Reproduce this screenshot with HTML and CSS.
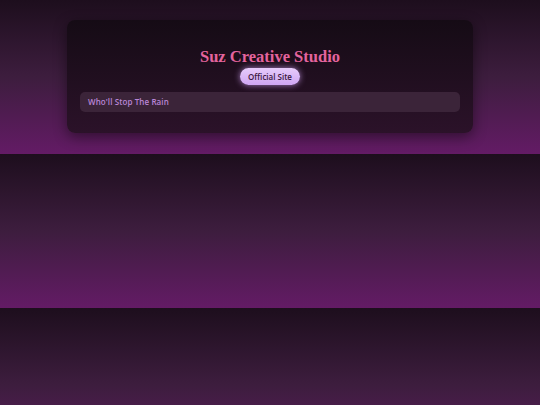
FILE: index.html
```html
<!DOCTYPE html>
<html>
<head>
<meta charset="utf-8">
<link rel="stylesheet" href="styles.css">
</head>
<body>
<main class="card">
  <h1 class="title">Suz Creative Studio</h1>
  <div class="badge-row"><a class="badge">Official Site</a></div>
  <ul class="list">
    <li class="item">Who'll Stop The Rain</li>
  </ul>
</main>
</body>
</html>
```
FILE: styles.css
```css
html {
  margin: 0;
}
body {
  margin: 0;
  padding: 20px 0 21px;
  background: linear-gradient(to bottom, #1d0e1d 0%, #3d1d3e 50%, #631b65 100%);
  font-family: "Open Sans", "Liberation Sans", sans-serif;
}
.card {
  width: 406px;
  margin: 0 auto;
  box-sizing: border-box;
  padding: 26px 13px 21px;
  border-radius: 8px;
  background: linear-gradient(to bottom, #150b15 0%, #2b1229 100%);
  box-shadow: 0 4px 14px rgba(0, 0, 0, 0.45);
}
.title {
  margin: 0;
  text-align: center;
  font-family: "Liberation Serif", "DejaVu Serif", serif;
  font-weight: 700;
  font-size: 16.5px;
  line-height: 22px;
  color: #e4649e;
}
.badge-row {
  display: flex;
  justify-content: center;
}
.badge {
  display: inline-block;
  padding: 0 8px;
  height: 17px;
  line-height: 17px;
  border-radius: 9px;
  background: linear-gradient(to bottom, #e6cbfb, #cfa6f3);
  color: #3a1840;
  font-size: 8px;
  font-weight: 600;
  box-shadow: 0 0 6px rgba(210, 160, 245, 0.75);
}
.list {
  list-style: none;
  margin: 7px 0 0;
  padding: 0;
}
.item {
  height: 20px;
  line-height: 20px;
  padding: 0 8px;
  border-radius: 5px;
  background: #3b2439;
  color: #b986d6;
  font-size: 8px;
  font-weight: 600;
  letter-spacing: 0.1px;
}
```
